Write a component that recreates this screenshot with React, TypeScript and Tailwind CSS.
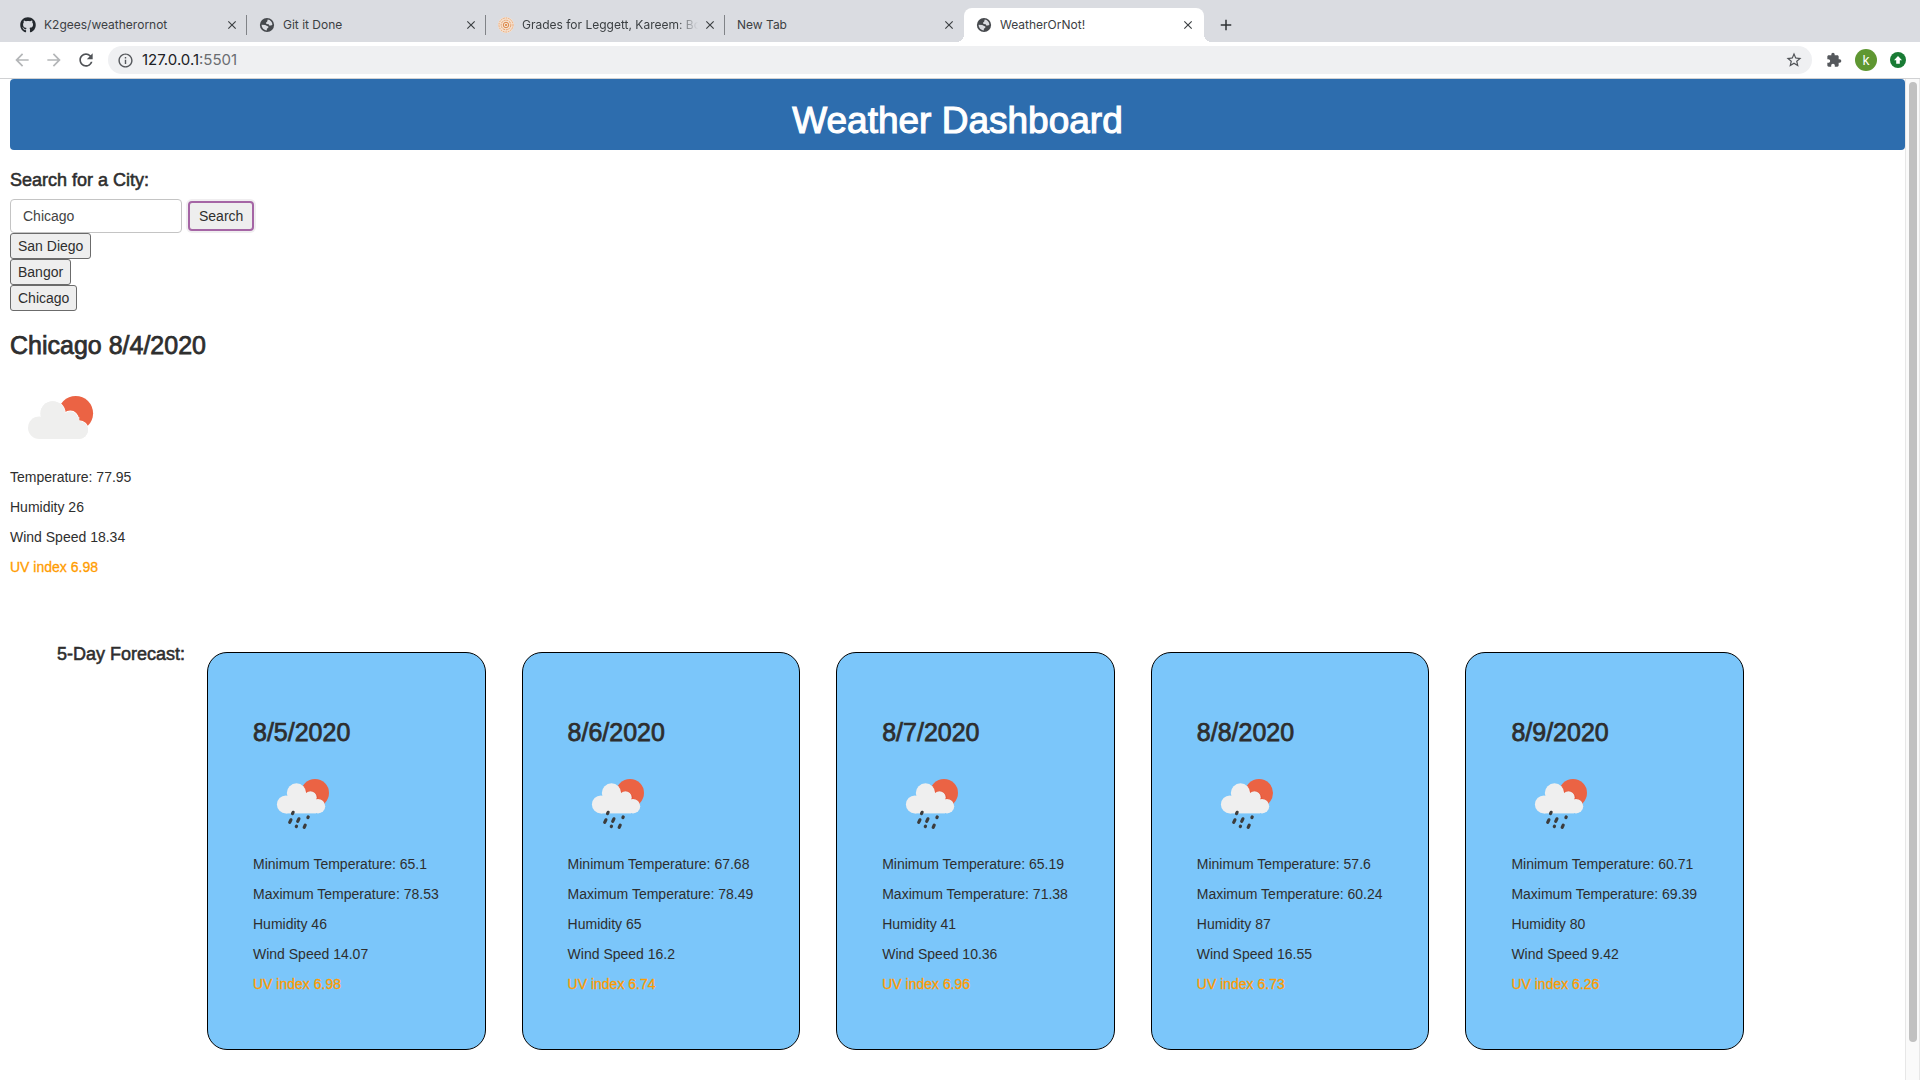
import React from "react";
import { MdClose, MdAdd, MdArrowBack, MdArrowForward, MdRefresh, MdInfoOutline, MdStarBorder, MdExtension } from "react-icons/md";
import { FaGithub } from "react-icons/fa";

type Favicon = "github" | "globe" | "rings" | null;

const tabs: { title: string; icon: Favicon; active?: boolean }[] = [
  { title: "K2gees/weatherornot", icon: "github" },
  { title: "Git it Done", icon: "globe" },
  { title: "Grades for Leggett, Kareem: Bo", icon: "rings" },
  { title: "New Tab", icon: null },
  { title: "WeatherOrNot!", icon: "globe", active: true },
];

const cities = ["San Diego", "Bangor", "Chicago"];

const forecast = [
  { date: "8/5/2020", min: "65.1", max: "78.53", humidity: "46", wind: "14.07", uv: "6.98" },
  { date: "8/6/2020", min: "67.68", max: "78.49", humidity: "65", wind: "16.2", uv: "6.74" },
  { date: "8/7/2020", min: "65.19", max: "71.38", humidity: "41", wind: "10.36", uv: "6.96" },
  { date: "8/8/2020", min: "57.6", max: "60.24", humidity: "87", wind: "16.55", uv: "6.73" },
  { date: "8/9/2020", min: "60.71", max: "69.39", humidity: "80", wind: "9.42", uv: "6.26" },
];

function Globe() {
  return (
    <svg viewBox="0 0 16 16" className="size-4 shrink-0" aria-hidden="true">
      <circle cx="8" cy="8" r="7.1" fill="#46494d" />
      <path
        d="M8.7 2.6c2.6.3 4.6 2.5 4.7 5.1l-1.3.9-1.9-.1-.5-1.3-2.2-.3-.6-1.2 1.2-.9.3-1.1z M2.6 7.8l3.6.1 1.9 1.2 1.3.3-.2 1.5-1.2.6-.3 1.9c-2.9-.1-5-2.5-5.1-5.6z"
        fill="#dadce1"
      />
    </svg>
  );
}

function Rings() {
  return (
    <svg viewBox="0 0 16 16" className="size-4 shrink-0" fill="none" aria-hidden="true">
      <circle cx="8" cy="8" r="8" fill="#f6e0cd" />
      <circle cx="8" cy="8" r="7" stroke="#e9a877" strokeDasharray="1.5 1" />
      <circle cx="8" cy="8" r="4.8" stroke="#e5a06c" strokeDasharray="2 .8" />
      <circle cx="8" cy="8" r="2.7" stroke="#dc8a4e" />
      <circle cx="8" cy="8" r="1.1" fill="#d9823f" />
    </svg>
  );
}

function TabIcon({ icon }: { icon: Favicon }) {
  if (icon === "github") return <FaGithub className="size-4 shrink-0 text-[#24292e]" />;
  if (icon === "globe") return <Globe />;
  if (icon === "rings") return <Rings />;
  return null;
}

function CloudSun() {
  return (
    <svg viewBox="0 0 100 100" className="size-[100px]" role="img" aria-label="Few clouds">
      <circle cx="65.7" cy="46.3" r="17.4" fill="#eb6344" />
      <g fill="#efefee" stroke="white" strokeWidth="1.6" paintOrder="stroke">
        <circle cx="42.7" cy="46.5" r="12.2" />
        <circle cx="60.3" cy="52" r="7.6" />
        <circle cx="69" cy="63" r="9" />
      </g>
      <g fill="#efefee">
        <circle cx="29.3" cy="60.7" r="11.3" />
        <circle cx="42.7" cy="46.5" r="12.2" />
        <circle cx="60.3" cy="52" r="7.6" />
        <circle cx="69" cy="63" r="9" />
        <path d="M29.3 50h40v22h-40z" />
      </g>
    </svg>
  );
}

function CloudRain() {
  return (
    <svg viewBox="0 0 100 100" className="size-[100px]" role="img" aria-label="Rain">
      <circle cx="62" cy="39" r="14" fill="#eb6344" />
      <g fill="none" stroke="#e0452a" strokeWidth="1">
        <path d="M53.2 40a9.8 9.8 0 0 0-3.2-7.6M63.8 45.5a6.2 6.2 0 0 0-8.6-7.4M71.6 49.6a7.5 7.5 0 0 0-6.6-4.3" />
      </g>
      <g fill="#efefef">
        <circle cx="32.9" cy="50.4" r="9" />
        <circle cx="43.5" cy="39" r="9.7" />
        <circle cx="57.5" cy="43.4" r="6.2" />
        <circle cx="65" cy="52.2" r="7.2" />
        <path d="M33 42h30v17.4h-30z" />
      </g>
      <path
        d="M40.1 58.3l-.6 1.3M37.9 65.8l-1.2 2.6M45.9 64.8l-1.2 2.6M55.2 62.9l-.3.7M43.5 72.1l-.2.4M52.2 71.2l-1 2.2"
        stroke="#3c3c3c"
        strokeWidth="3.2"
        strokeLinecap="round"
      />
    </svg>
  );
}

function BrowserTabs() {
  return (
    <div className="flex h-[42px] items-end bg-[#dadce1] pl-2">
      {tabs.map((tab, i) => (
        <div
          key={tab.title}
          className={
            tab.active
              ? "relative flex h-[34px] w-[240px] items-center gap-2 rounded-t-lg bg-white pl-3 pr-2"
              : "relative flex h-[34px] w-[239px] items-center gap-2 pl-3 pr-[7px]"
          }
        >
          {tab.active && (
            <>
              <span className="absolute -left-2 bottom-0 size-2 bg-[radial-gradient(circle_at_0_0,#dadce1_8px,white_8px)]" />
              <span className="absolute -right-2 bottom-0 size-2 bg-[radial-gradient(circle_at_100%_0,#dadce1_8px,white_8px)]" />
            </>
          )}
          <TabIcon icon={tab.icon} />
          <span
            className={
              tab.icon === "rings"
                ? "-mr-1 min-w-0 flex-1 overflow-hidden whitespace-nowrap [mask-image:linear-gradient(to_right,black_88%,transparent)]"
                : "min-w-0 flex-1 overflow-hidden whitespace-nowrap"
            }
          >
            {tab.title}
          </span>
          <button type="button" aria-label={"Close " + tab.title} className="flex size-4 shrink-0 items-center justify-center text-[#3c4043]">
            <MdClose className="size-[14px]" />
          </button>
          {i < 3 && <span className="absolute right-0 top-[7px] h-5 w-px bg-[#808387]" />}
        </div>
      ))}
      <button type="button" aria-label="New tab" className="ml-3 flex h-[34px] w-5 items-center justify-center text-[#2f3235]">
        <MdAdd className="size-[18px]" />
      </button>
    </div>
  );
}

function Toolbar() {
  return (
    <div className="flex h-[37px] items-center border-b border-[#d0d1d3] bg-white pl-3 pr-[14px]">
      <button type="button" aria-label="Back" className="text-[#b4b6b8]"><MdArrowBack className="size-5" /></button>
      <button type="button" aria-label="Forward" className="ml-3 text-[#b4b6b8]"><MdArrowForward className="size-5" /></button>
      <button type="button" aria-label="Reload" className="ml-3 text-[#505357]"><MdRefresh className="size-5" /></button>
      <div className="ml-3 flex h-7 flex-1 items-center rounded-full bg-[#eff0f2] px-[9px]">
        <MdInfoOutline className="size-[17px] text-[#55585c]" />
        <span className="ml-2 flex-1 text-[15px] leading-5 text-[#6a6d71]">
          <span className="text-[#202124]">127.0.0.1</span>:5501
        </span>
        <button type="button" aria-label="Bookmark" className="text-[#505357]"><MdStarBorder className="size-[18px]" /></button>
      </div>
      <button type="button" aria-label="Extensions" className="ml-[14px] text-[#55585c]"><MdExtension className="size-4" /></button>
      <button type="button" aria-label="Profile" className="ml-[13px] size-[22px] rounded-full bg-[#5f9732] text-[13px] leading-[22px] text-white">k</button>
      <button type="button" aria-label="Update" className="ml-[13px] size-4">
        <svg viewBox="0 0 16 16" className="size-4" aria-hidden="true">
          <circle cx="8" cy="8" r="8" fill="#197b34" />
          <path d="M8 4l4 4.3H9.8V11.8H6.2V8.3H4z" fill="white" />
        </svg>
      </button>
    </div>
  );
}

function Readings({ rows, uv }: { rows: string[]; uv: string }) {
  return (
    <>
      {rows.map((row) => (
        <p key={row} className="mb-[10px]">{row}</p>
      ))}
      <p className="mb-[10px] text-[#ff9c00] [-webkit-text-stroke:0.3px_#ff9c00]">UV index {uv}</p>
    </>
  );
}

export default function App() {
  return (
    <div className="flex min-h-screen flex-col bg-white">
      <header className="font-['Inter',sans-serif] text-[12px] text-[#3c4043]">
        <BrowserTabs />
        <Toolbar />
      </header>
      <div className="flex flex-1 font-['Liberation_Sans',Arial,sans-serif] text-[14px] leading-5 text-[#2e2e2e]">
        <main className="min-w-0 flex-1">
          <div className="ml-[10px]">
            <h1 className="rounded bg-[#2d6dae] pb-[9px] pt-[22px] text-center text-[37px] leading-10 text-white [-webkit-text-stroke:0.03em_currentColor]">
              Weather Dashboard
            </h1>
            <form className="mt-5" onSubmit={(e) => e.preventDefault()}>
              <label htmlFor="city" className="block text-[18px] [-webkit-text-stroke:0.03em_currentColor]">Search for a City:</label>
              <div className="mt-[9px] flex items-center">
                <input
                  id="city"
                  type="text"
                  defaultValue="Chicago"
                  className="h-[34px] w-[172px] rounded border border-[#c4c4c4] px-3 text-[#444]"
                />
                <button type="submit" className="ml-[6px] h-[30px] rounded border-2 border-[#a565a5] bg-[#eee] px-[9px] shadow-[0_0_0_2px_#f0eef0]">
                  Search
                </button>
              </div>
            </form>
            <div className="flex flex-col items-start">
              {cities.map((city) => (
                <button key={city} type="button" className="h-[26px] rounded-[3px] border border-[#6b6b6b] bg-[#eee] px-[7px]">
                  {city}
                </button>
              ))}
            </div>
            <section>
              <h2 className="mb-2 mt-5 text-[25px] leading-7 [-webkit-text-stroke:0.03em_currentColor]">Chicago 8/4/2020</h2>
              <CloudSun />
              <Readings rows={["Temperature: 77.95", "Humidity 26", "Wind Speed 18.34"]} uv="6.98" />
            </section>
          </div>
          <section className="mt-[67px] flex pb-[30px] pl-[57px] pr-[161px]">
            <h2 className="w-[150px] shrink-0 text-[18px] [-webkit-text-stroke:0.03em_currentColor]">5-Day Forecast:</h2>
            <div className="mt-2 grid flex-1 grid-cols-5 gap-9">
              {forecast.map((day) => (
                <article key={day.date} className="whitespace-nowrap rounded-[20px] border border-black bg-[#7bc6fa] p-[45px]">
                  <h3 className="mb-2 mt-5 text-[25px] leading-7 [-webkit-text-stroke:0.03em_currentColor]">{day.date}</h3>
                  <CloudRain />
                  <Readings
                    rows={[
                      `Minimum Temperature: ${day.min}`,
                      `Maximum Temperature: ${day.max}`,
                      `Humidity ${day.humidity}`,
                      `Wind Speed ${day.wind}`,
                    ]}
                    uv={day.uv}
                  />
                </article>
              ))}
            </div>
          </section>
        </main>
        <div className="flex w-[15px] flex-col items-center border-x border-[#e7e7e7] bg-[#fafafa] pb-[38px] pt-[3px]" aria-hidden="true">
          <div className="w-2 flex-1 rounded-full bg-[#c1c1c1]" />
        </div>
      </div>
    </div>
  );
}
